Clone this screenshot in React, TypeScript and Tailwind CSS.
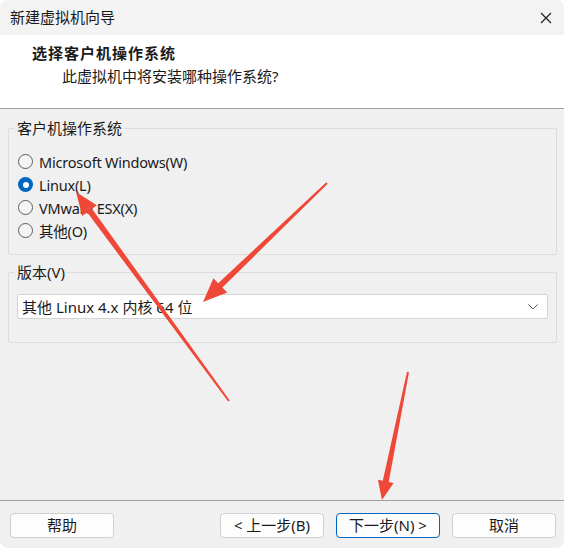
import * as React from "react";

type Pt = [number, number];

// tapered arrow: thin tail, thicker near the head, triangular head
function arrowPoints(tail: Pt, tip: Pt, headLen: number, headHalf: number, w0: number, w1: number) {
  const dx = tip[0] - tail[0];
  const dy = tip[1] - tail[1];
  const len = Math.hypot(dx, dy);
  const ux = dx / len;
  const uy = dy / len;
  const nx = -uy;
  const ny = ux;
  const bx = tip[0] - ux * headLen;
  const by = tip[1] - uy * headLen;
  const pts: Pt[] = [
    [tail[0] + (nx * w0) / 2, tail[1] + (ny * w0) / 2],
    [bx + (nx * w1) / 2, by + (ny * w1) / 2],
    [bx + nx * headHalf, by + ny * headHalf],
    tip,
    [bx - nx * headHalf, by - ny * headHalf],
    [bx - (nx * w1) / 2, by - (ny * w1) / 2],
    [tail[0] - (nx * w0) / 2, tail[1] - (ny * w0) / 2],
  ];
  return pts.map((p) => `${p[0].toFixed(1)},${p[1].toFixed(1)}`).join(" ");
}

const ARROWS = [
  { tail: [229, 401] as Pt, tip: [76, 192] as Pt, len: 23, half: 9, w0: 2, w1: 6 },
  { tail: [327, 183] as Pt, tip: [203, 302] as Pt, len: 24, half: 10, w0: 2, w1: 6 },
  { tail: [408, 372] as Pt, tip: [382, 500] as Pt, len: 19, half: 8, w0: 2, w1: 6 },
];

const OPCOES = [
  { label: "Microsoft Windows(W)", checked: false },
  { label: "Linux(L)", checked: true },
  { label: "VMware ESX(X)", checked: false },
  { label: "其他(O)", checked: false },
];

function Radio({ checked }: { checked: boolean }) {
  if (checked) {
    return (
      <span className="w-[15px] h-[15px] rounded-full bg-[#0067c0] flex items-center justify-center shrink-0">
        <span className="w-[6px] h-[6px] rounded-full bg-white" />
      </span>
    );
  }
  return <span className="w-[15px] h-[15px] rounded-full border border-[#5c5c5c] bg-[#f5f5f5] shrink-0" />;
}

function Botao({ children, primary }: { children: React.ReactNode; primary?: boolean }) {
  return (
    <button
      className={
        "w-[104px] h-[25px] rounded-[4px] bg-[#fdfdfd] text-[15px] text-[#1a1a1a] flex items-center justify-center border " +
        (primary ? "border-[#0067c0]" : "border-[#d0d0d0]")
      }
    >
      {children}
    </button>
  );
}

export default function App() {
  return (
    <div className="w-[564px] h-[548px] bg-white">
      <div
        className="relative w-[564px] h-[548px] bg-[#f0f0f0] rounded-[8px] overflow-hidden flex flex-col text-[#1a1a1a]"
        style={{ fontFamily: '"Noto Sans", "Noto Sans CJK SC", sans-serif' }}
      >
        {/* barra de titulo */}
        <div className="h-[35px] bg-[#f3f3f3] flex items-center justify-between pl-[10px] pr-[12px] shrink-0">
          <span className="text-[15px] leading-[20px] -mt-[2px]">新建虚拟机向导</span>
          <svg width="12" height="12" viewBox="0 0 12 12">
            <path d="M1 1 L11 11 M11 1 L1 11" stroke="#1a1a1a" strokeWidth="1.1" />
          </svg>
        </div>

        {/* cabecalho */}
        <div className="h-[74px] bg-white border-b border-[#a0a0a0] shrink-0 pt-[8px]">
          <div className="pl-[32px] text-[15px] leading-[20px] font-bold tracking-[1px]">选择客户机操作系统</div>
          <div className="pl-[62px] mt-[3px] text-[15px] leading-[20px]">此虚拟机中将安装哪种操作系统?</div>
        </div>

        {/* corpo */}
        <div className="flex-1 px-[8px] pt-[9px]">
          <fieldset className="border border-[#dcdcdc] rounded-[2px] pb-[12px] w-[549px]">
            <legend className="ml-[6px] px-[2px] text-[15px] leading-[20px]">客户机操作系统</legend>
            <div className="pt-[12px] pl-[9px] flex flex-col">
              {OPCOES.map((o) => (
                <div key={o.label} className="h-[23px] flex items-center gap-[6px]">
                  <Radio checked={o.checked} />
                  <span className="text-[14.5px] leading-[20px] tracking-[-0.2px]">{o.label}</span>
                </div>
              ))}
            </div>
          </fieldset>

          <fieldset className="mt-[7px] border border-[#dcdcdc] rounded-[2px] pb-[23px] w-[549px]">
            <legend className="ml-[6px] px-[2px] text-[15px] leading-[20px]">版本(V)</legend>
            <div className="pt-[12px] px-[8px]">
              <div className="h-[25px] w-[531px] bg-white border border-[#d4d4d4] rounded-[2px] flex items-center justify-between pl-[4px] pr-[9px]">
                <span className="text-[15px] leading-[20px]">其他 Linux 4.x 内核 64 位</span>
                <svg width="10" height="6" viewBox="0 0 10 6">
                  <path d="M0.5 0.5 L5 5 L9.5 0.5" fill="none" stroke="#5a5a5a" strokeWidth="1" />
                </svg>
              </div>
            </div>
          </fieldset>
        </div>

        {/* rodape */}
        <div className="h-[48px] border-t border-[#a0a0a0] shrink-0 flex items-start pt-[12px] pl-[10px] pr-[8px]">
          <Botao>帮助</Botao>
          <div className="flex-1" />
          <div className="flex gap-[12px]">
            <Botao>&lt; 上一步(B)</Botao>
            <Botao primary>下一步(N) &gt;</Botao>
            <Botao>取消</Botao>
          </div>
        </div>

        {/* setas de anotacao */}
        <svg className="absolute left-0 top-0 pointer-events-none" width="564" height="548">
          {ARROWS.map((a, i) => (
            <polygon key={i} points={arrowPoints(a.tail, a.tip, a.len, a.half, a.w0, a.w1)} fill="#ef4838" />
          ))}
        </svg>
      </div>
    </div>
  );
}
